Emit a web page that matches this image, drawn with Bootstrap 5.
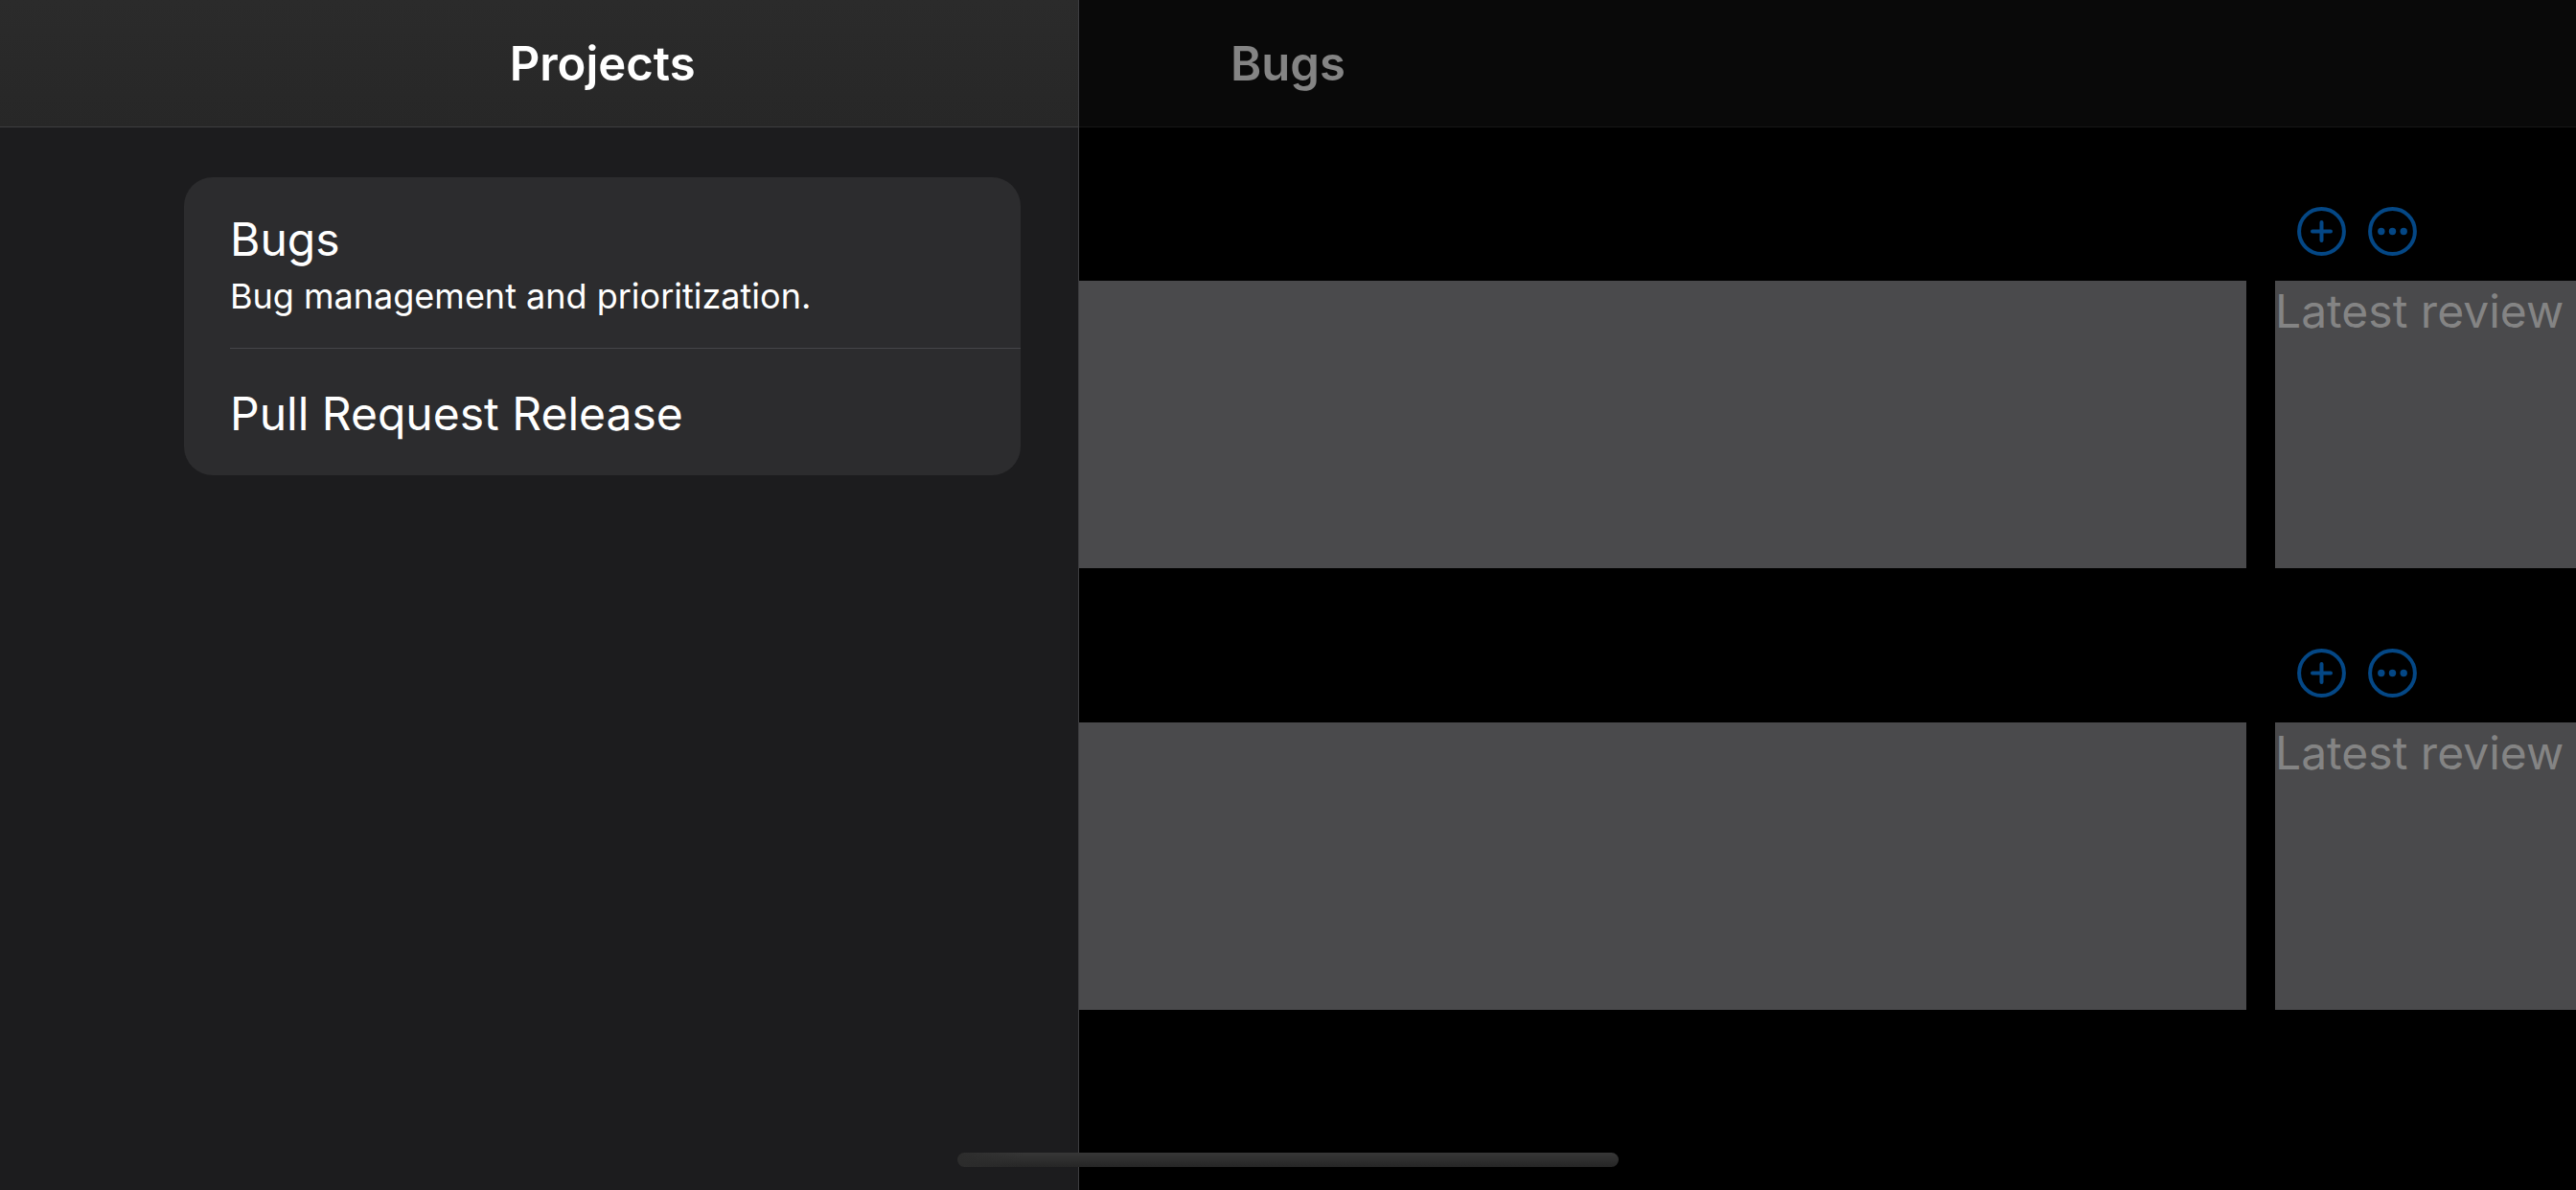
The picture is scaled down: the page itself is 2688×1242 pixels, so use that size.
<!DOCTYPE html>
<html lang="en" data-bs-theme="dark">
<head>
<meta charset="utf-8">
<meta name="viewport" content="width=device-width, initial-scale=1">
<title>Projects</title>
<link href="https://cdn.jsdelivr.net/npm/bootstrap@5.3.0/dist/css/bootstrap.min.css" rel="stylesheet">
<style>
  body { background: #000; color: #fff; font-family: Inter, Roboto, sans-serif; font-size: 48px; line-height: 60px; }
  .bar { height: 133px; padding-top: 1px; border-bottom: 1px solid #161616; background: #090909; }
  .bar h1, .bar h2 { font-size: 49px; line-height: 60px; font-weight: 600; }
  .bar h2 { color: #848484; }
  .side { width: 41.9%; background: #1c1c1e; border-right: 1px solid #3d3d40; }
  .side .bar { background: linear-gradient(#2b2b2b, #272727); border-color: #3d3d3f; padding-left: 192px; padding-right: 60px; }
  .side-body { padding: 52px 60px 0 192px; }
  .projects { background: #2c2c2e; border-radius: 30px; overflow: hidden; }
  .project { display: block; margin-left: 48px; padding: 38px 48px 34px 0; color: #fff; text-decoration: none; }
  .project + .project { border-top: 1px solid #464649; }
  .project small { display: block; font-size: 36px; line-height: 48px; padding-top: 5px; }
  .project.two-line { padding-top: 35px; padding-bottom: 30px; }
  .board { padding-top: 52px; }
  .lane { gap: 30px; margin-bottom: 53px; }
  .field { flex: 0 0 314px; }
  .tools { height: 108px; gap: 23px; padding: 31px 23px 0; }
  .tool { width: 51px; height: 51px; color: #044785; }
  .tool svg { display: block; width: 51px; height: 51px; }
  .tile { height: 300px; background: #4a4a4c; color: #848484; padding-top: 2px; }
  .home { width: 690px; height: 15px; bottom: 24px; background: linear-gradient(90deg, #2c2c2c, rgba(44,44,44,0) 10%), linear-gradient(#373737, #262626); }
</style>
<script src="https://cdn.jsdelivr.net/npm/bootstrap@5.3.0/dist/js/bootstrap.bundle.min.js"></script>
</head>
<body>
<div class="position-relative min-vh-100 overflow-hidden">
  <main>
    <header class="bar d-flex align-items-center justify-content-center"><h2 class="m-0">Bugs</h2></header>
    <div class="board">
      <section class="lane d-flex">
        <div class="flex-grow-1"><div class="tools"></div><div class="tile"></div></div>
        <div class="field">
          <div class="tools d-flex">
            <button type="button" class="tool btn p-0 border-0" aria-label="Add"><svg viewBox="0 0 51 51" fill="none" stroke="currentColor" stroke-width="4" stroke-linecap="round"><circle cx="25.500" cy="25.500" r="23.400"/><path d="M25.500 16v19M16 25.500h19"/></svg></button>
            <button type="button" class="tool btn p-0 border-0" aria-label="More"><svg viewBox="0 0 51 51" fill="currentColor"><circle cx="25.500" cy="25.500" r="23.400" fill="none" stroke="currentColor" stroke-width="4"/><circle cx="13.800" cy="25.500" r="3.700"/><circle cx="25.500" cy="25.500" r="3.700"/><circle cx="37.200" cy="25.500" r="3.700"/></svg></button>
          </div>
          <div class="tile text-nowrap">Latest review</div>
        </div>
      </section>
      <section class="lane d-flex">
        <div class="flex-grow-1"><div class="tools"></div><div class="tile"></div></div>
        <div class="field">
          <div class="tools d-flex">
            <button type="button" class="tool btn p-0 border-0" aria-label="Add"><svg viewBox="0 0 51 51" fill="none" stroke="currentColor" stroke-width="4" stroke-linecap="round"><circle cx="25.500" cy="25.500" r="23.400"/><path d="M25.500 16v19M16 25.500h19"/></svg></button>
            <button type="button" class="tool btn p-0 border-0" aria-label="More"><svg viewBox="0 0 51 51" fill="currentColor"><circle cx="25.500" cy="25.500" r="23.400" fill="none" stroke="currentColor" stroke-width="4"/><circle cx="13.800" cy="25.500" r="3.700"/><circle cx="25.500" cy="25.500" r="3.700"/><circle cx="37.200" cy="25.500" r="3.700"/></svg></button>
          </div>
          <div class="tile text-nowrap">Latest review</div>
        </div>
      </section>
    </div>
  </main>
  <aside class="side position-absolute top-0 bottom-0 start-0">
    <header class="bar d-flex align-items-center justify-content-center"><h1 class="m-0">Projects</h1></header>
    <div class="side-body">
      <nav class="projects" aria-label="Projects">
        <a class="project two-line" href="#bugs">Bugs<small>Bug management and prioritization.</small></a>
        <a class="project" href="#release">Pull Request Release</a>
      </nav>
    </div>
  </aside>
  <div class="home position-absolute start-50 translate-middle-x rounded-pill"></div>
</div>
</body>
</html>
